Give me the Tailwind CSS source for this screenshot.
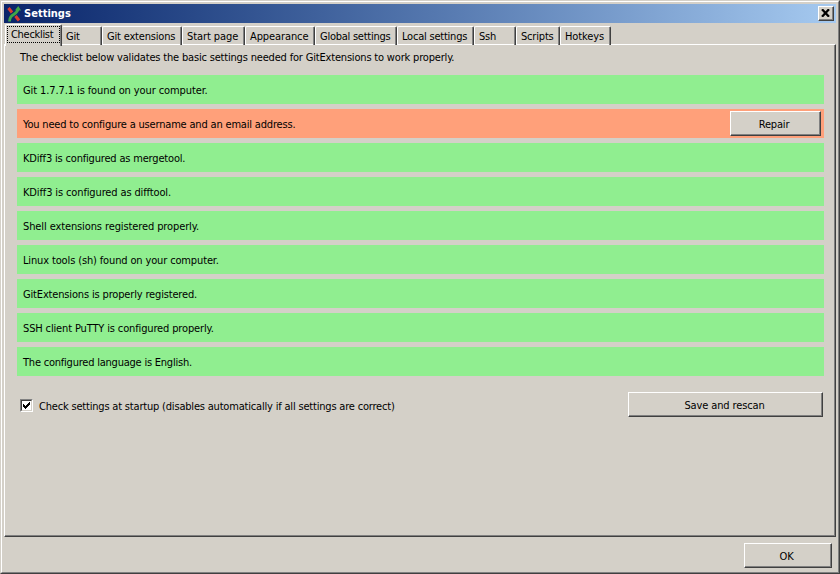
<!DOCTYPE html>
<html lang="en">
<head>
<meta charset="utf-8">
<title>Settings</title>
<script src="https://cdn.jsdelivr.net/npm/@tailwindcss/browser@4"></script>
</head>
<body class="w-[840px] h-[574px] overflow-hidden bg-[#d4d0c8] text-black text-[11px] leading-[14px] tracking-[-0.18px] whitespace-nowrap font-['DejaVu_Sans_Condensed','DejaVu_Sans',sans-serif]">
<div class="w-full h-full border border-t-[#d4d0c8] border-l-[#d4d0c8] border-r-[#404040] border-b-[#404040]">
<div class="w-full h-full border border-t-white border-l-white border-r-[#808080] border-b-[#808080] p-[2px] flex flex-col">

  <header class="h-[19px] shrink-0 flex items-center bg-linear-to-r from-[#0a246a] to-[#a6caf0] pl-[3px] pr-[2px]">
    <svg class="w-[16px] h-[16px] shrink-0" viewBox="0 0 16 16" fill="none">
      <path d="M1.500 2L5 6.500M8.500 10L12 14.500" stroke="#dc3b2e" stroke-width="3"/>
      <path d="M2.500 15.500C2.500 11 4.500 9.800 7 8.300C9.500 6.800 10.800 5.500 11 2.500" stroke="#3fa648" stroke-width="2.800"/>
      <path d="M8 4.200L11.300 0L14 4.600Z" fill="#3fa648"/>
    </svg>
    <h1 class="ml-[1px] pt-px flex-1 text-white font-bold tracking-[0.02px]">Settings</h1>
    <button class="w-[16px] h-[15px] bg-[#d4d0c8] border border-t-white border-l-white border-r-[#404040] border-b-[#404040]">
      <span class="flex w-full h-full items-start border-r border-b border-[#808080] pl-[2px] pt-[2px]">
        <svg class="w-[9px] h-[8px]" viewBox="0 0 9 8" fill="none"><path d="M1 0.300L8 7.700M8 0.300L1 7.700" stroke="#000" stroke-width="2.300"/></svg>
      </span>
    </button>
  </header>

  <nav class="relative z-10 h-[22px] shrink-0 flex items-end pl-px">
    <div class="w-[57px] h-[22px] -mb-px bg-[#d4d0c8] rounded-t-[2px] border-t border-l border-r border-t-white border-l-white border-r-[#404040]">
      <div class="h-full border-r border-[#808080] pl-px pt-px">
        <div class="w-[53px] h-[17px] border border-dotted border-black pl-[3px] pt-px tracking-[-0.3px]">Checklist</div>
      </div>
    </div>
    <div class="w-[40px] h-[19px] rounded-t-[2px] border-t border-r border-t-white border-r-[#404040]"><div class="h-full border-r border-[#808080] pl-[4px] pt-[3px]">Git</div></div>
    <div class="w-[80px] h-[19px] rounded-t-[2px] border-t border-l border-r border-t-white border-l-white border-r-[#404040]"><div class="h-full border-r border-[#808080] pl-[4px] pt-[3px]">Git extensions</div></div>
    <div class="w-[63px] h-[19px] rounded-t-[2px] border-t border-l border-r border-t-white border-l-white border-r-[#404040]"><div class="h-full border-r border-[#808080] pl-[4px] pt-[3px] tracking-[-0.08px]">Start page</div></div>
    <div class="w-[70px] h-[19px] rounded-t-[2px] border-t border-l border-r border-t-white border-l-white border-r-[#404040]"><div class="h-full border-r border-[#808080] pl-[4px] pt-[3px] tracking-[-0.1px]">Appearance</div></div>
    <div class="w-[82px] h-[19px] rounded-t-[2px] border-t border-l border-r border-t-white border-l-white border-r-[#404040]"><div class="h-full border-r border-[#808080] pl-[4px] pt-[3px] tracking-[-0.25px]">Global settings</div></div>
    <div class="w-[77px] h-[19px] rounded-t-[2px] border-t border-l border-r border-t-white border-l-white border-r-[#404040]"><div class="h-full border-r border-[#808080] pl-[4px] pt-[3px] tracking-[-0.22px]">Local settings</div></div>
    <div class="w-[42px] h-[19px] rounded-t-[2px] border-t border-l border-r border-t-white border-l-white border-r-[#404040]"><div class="h-full border-r border-[#808080] pl-[4px] pt-[3px]">Ssh</div></div>
    <div class="w-[44px] h-[19px] rounded-t-[2px] border-t border-l border-r border-t-white border-l-white border-r-[#404040]"><div class="h-full border-r border-[#808080] pl-[4px] pt-[3px]">Scripts</div></div>
    <div class="w-[51px] h-[19px] rounded-t-[2px] border-t border-l border-r border-t-white border-l-white border-r-[#404040]"><div class="h-full border-r border-[#808080] pl-[4px] pt-[3px] tracking-[-0.1px]">Hotkeys</div></div>
  </nav>

  <main class="-mt-px h-[493px] w-[832px] shrink-0 border border-t-white border-l-white border-r-[#404040] border-b-[#404040]">
    <div class="h-full border-r border-b border-[#808080] pl-[12px] pr-[9px] pt-[6px]">
      <p class="pl-[3px] h-[24px]">The checklist below validates the basic settings needed for GitExtensions to work properly.</p>
      <div class="w-[807px] flex flex-col gap-[5px]">
        <div class="h-[29px] flex items-center pt-[2px] pl-[6px] bg-[#90ee90] tracking-[-0.1px]">Git 1.7.7.1 is found on your computer.</div>
        <div class="h-[29px] flex items-center justify-between pl-[6px] pr-[3px] bg-[#ffa07a]">
          <span class="pt-[2px]">You need to configure a username and an email address.</span>
          <button class="w-[91px] h-[25px] bg-[#d4d0c8] border border-t-white border-l-white border-r-[#404040] border-b-[#404040]"><span class="flex w-full h-full items-center justify-center border-r border-b border-[#808080] pt-[4px] pr-[2px]">Repair</span></button>
        </div>
        <div class="h-[29px] flex items-center pt-[2px] pl-[6px] bg-[#90ee90]">KDiff3 is configured as mergetool.</div>
        <div class="h-[29px] flex items-center pt-[2px] pl-[6px] bg-[#90ee90] tracking-[-0.13px]">KDiff3 is configured as difftool.</div>
        <div class="h-[29px] flex items-center pt-[2px] pl-[6px] bg-[#90ee90] tracking-[-0.11px]">Shell extensions registered properly.</div>
        <div class="h-[29px] flex items-center pt-[2px] pl-[6px] bg-[#90ee90] tracking-[-0.14px]">Linux tools (sh) found on your computer.</div>
        <div class="h-[29px] flex items-center pt-[2px] pl-[6px] bg-[#90ee90] tracking-[-0.16px]">GitExtensions is properly registered.</div>
        <div class="h-[29px] flex items-center pt-[2px] pl-[6px] bg-[#90ee90] tracking-[-0.14px]">SSH client PuTTY is configured properly.</div>
        <div class="h-[29px] flex items-center pt-[2px] pl-[6px] bg-[#90ee90] tracking-[-0.22px]">The configured language is English.</div>
      </div>
      <div class="mt-[16px] w-[806px] h-[25px] flex items-center justify-between pl-[3px]">
        <label class="flex items-center gap-[6px] pt-[2px]">
          <span class="w-[13px] h-[13px] border border-t-[#808080] border-l-[#808080] border-r-white border-b-white">
            <span class="block w-full h-full bg-white border border-t-[#404040] border-l-[#404040] border-r-[#d4d0c8] border-b-[#d4d0c8] p-px">
              <svg class="w-[7px] h-[7px]" viewBox="0 0 7 7" shape-rendering="crispEdges"><path d="M0 2h1v1h1v1h1v-1h1v-1h1v-1h1v-1h1v3h-1v1h-1v1h-1v1h-1v1h-1v-1h-1v-1h-1z"/></svg>
            </span>
          </span>
          <span class="pt-[2px] tracking-[-0.19px]">Check settings at startup (disables automatically if all settings are correct)</span>
        </label>
        <button class="w-[195px] h-[25px] bg-[#d4d0c8] border border-t-white border-l-white border-r-[#404040] border-b-[#404040]"><span class="flex w-full h-full items-center justify-center border-r border-b border-[#808080] pt-[4px] pr-px tracking-[-0.12px]">Save and rescan</span></button>
      </div>
    </div>
  </main>

  <footer class="flex justify-end pt-[6px] pr-[4px]">
    <button class="w-[88px] h-[25px] bg-[#d4d0c8] border border-t-white border-l-white border-r-[#404040] border-b-[#404040]"><span class="flex w-full h-full items-center justify-center border-r border-b border-[#808080] pt-[4px] pr-[2px]">OK</span></button>
  </footer>
</div>
</div>
</body>
</html>
